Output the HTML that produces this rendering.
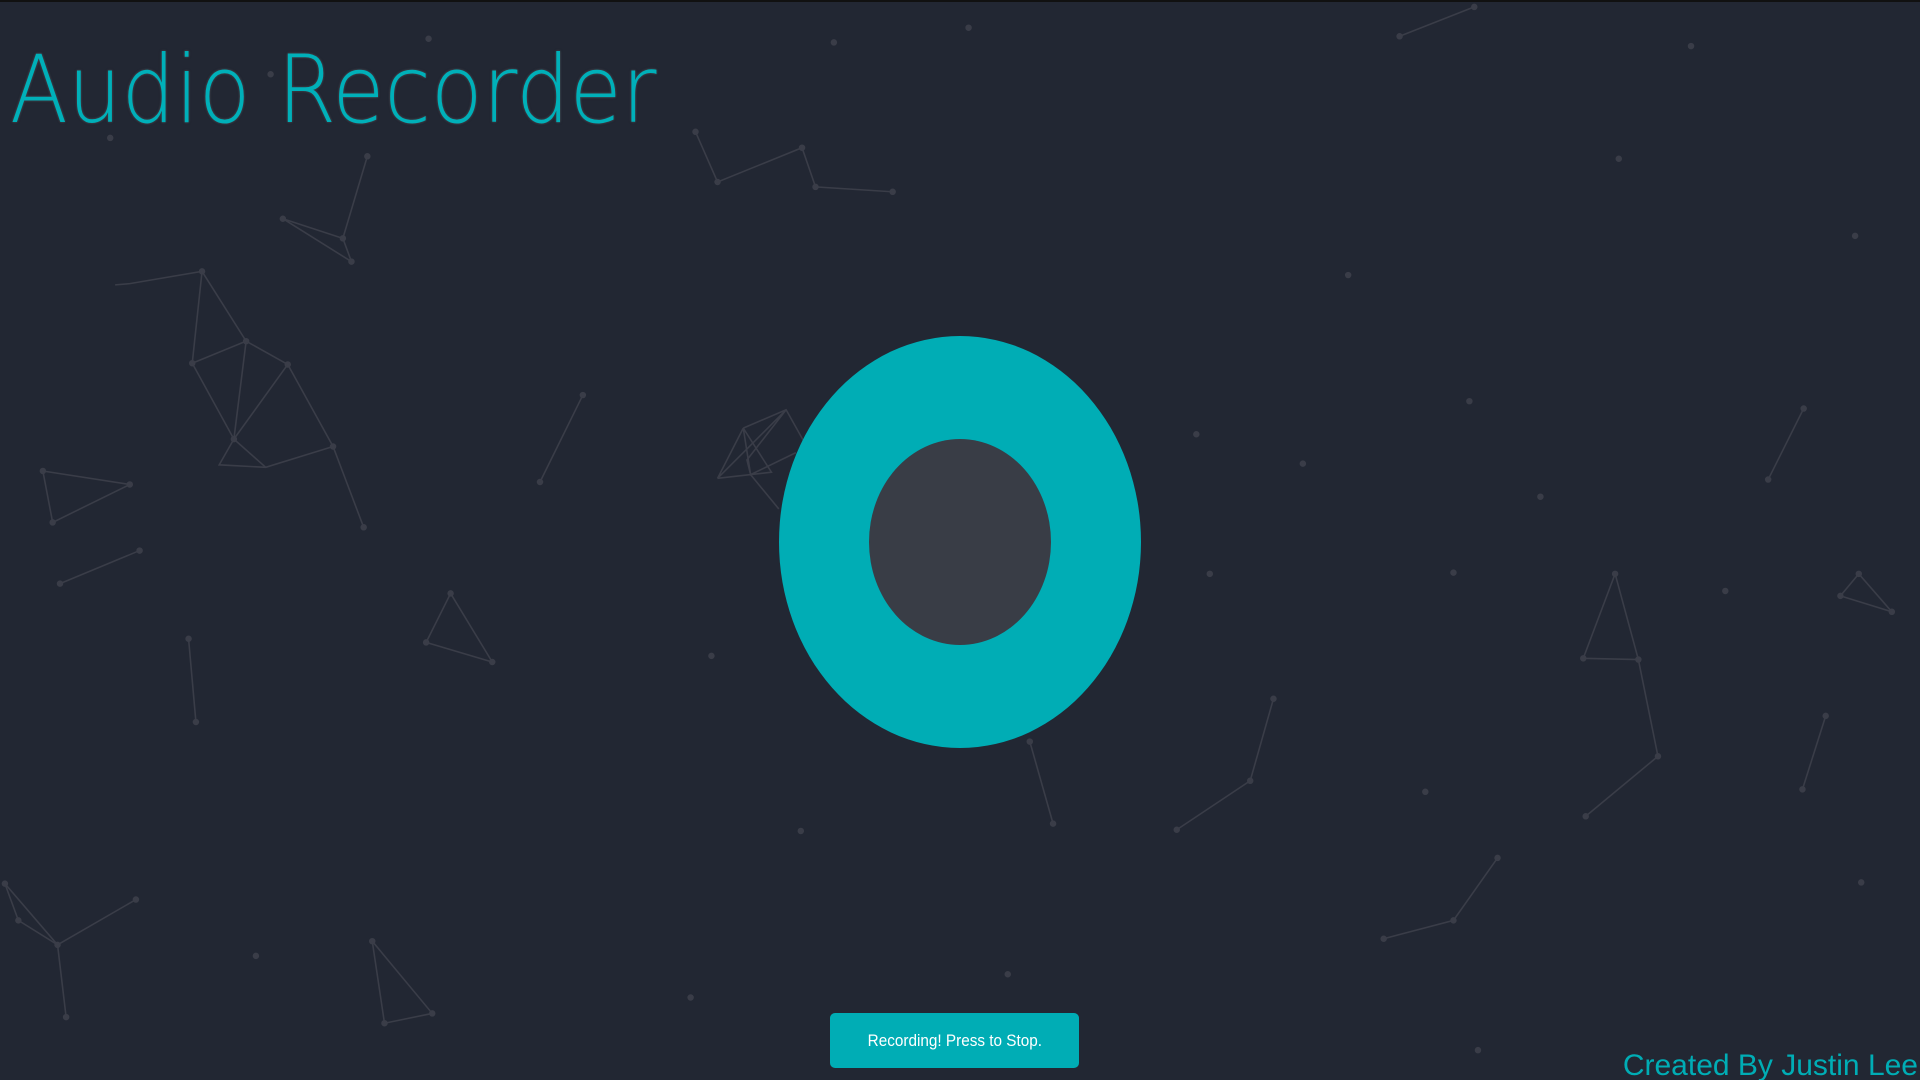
<!DOCTYPE html>
<html><head><meta charset="utf-8"><style>
html,body{margin:0;padding:0;width:1920px;height:1080px;overflow:hidden;background:#222733;}
body{position:relative;font-family:"Liberation Sans",sans-serif;border-top:2px solid #111;box-sizing:border-box;}
svg.bg{position:absolute;left:0;top:0;}
h1{position:absolute;left:10px;top:34px;margin:0;font-size:94px;color:#00b0b9;text-shadow:0 0 3px #3a3d46,0 0 3px #3a3d46,0 0 2px #3a3d46;font-family:"DejaVu Sans","Liberation Sans",sans-serif;font-weight:200;transform:scaleX(0.9);transform-origin:left;white-space:nowrap;}
.outer{position:absolute;left:779px;top:334px;width:362px;height:412px;border-radius:50%;background:#00adb5;}
.inner{position:absolute;left:869px;top:437px;width:182px;height:206px;border-radius:50%;background:#393d46;}
.btn{position:absolute;left:830px;top:1011px;width:249px;height:55px;background:#00adb5;border-radius:5px;color:#fff;font-size:17px;line-height:55px;text-align:center;}
.btn span{display:inline-block;transform:scaleX(0.9);}
.foot{position:absolute;right:2px;top:1047px;color:#00adb5;font-size:30px;white-space:nowrap;}
</style></head><body>
<svg class="bg" width="1920" height="1080" viewBox="0 0 1568 882" stroke="#3a3d48" stroke-width="1.3" fill="#3a3d48">
<g fill="none">
<polyline points="94,231 106,230 165,220 201,277 235,296 272,363 297,429"/>
<polyline points="165,220 157,295 191,357 179,378 217,380 272,363"/>
<polyline points="157,295 201,277 191,357 235,296"/>
<polyline points="191,357 217,380"/>
<polyline points="231,177 280,193 300,126"/>
<polyline points="231,177 287,212 280,193"/>
<polyline points="35,383 106,394 43,425 35,383"/>
<polyline points="49,475 114,448"/>
<polyline points="154,520 160,588"/>
<polyline points="368,483 348,523 402,539 368,483"/>
<polyline points="441,392 476,321"/>
<polyline points="568,106 586,147 655,119 666,151 729,155"/>
<polyline points="1143,28 1204,4"/>
<polyline points="607,348 642,333 656,358"/>
<polyline points="607,348 586,389 642,333 610,374 613,386 636,414"/>
<polyline points="586,389 630,384 607,348 613,386 650,368"/>
<polyline points="841,604 860,671"/>
<polyline points="961,676 1021,636 1040,569"/>
<polyline points="1130,765 1187,750 1223,699"/>
<polyline points="1295,665 1354,616 1338,537 1319,467 1293,536 1338,537"/>
<polyline points="1444,390 1473,332"/>
<polyline points="1503,485 1518,467 1545,498 1503,485"/>
<polyline points="1472,643 1491,583"/>
<polyline points="4,720 15,750 47,770 111,733"/>
<polyline points="4,720 47,770 54,829"/>
<polyline points="304,767 314,834 353,826 304,767"/>
</g>
<g>
<circle cx="350" cy="30" r="2"/><circle cx="681" cy="33" r="2"/><circle cx="791" cy="21" r="2"/><circle cx="1381" cy="36" r="2"/>
<circle cx="1322" cy="128" r="2"/><circle cx="1515" cy="191" r="2"/><circle cx="1101" cy="223" r="2"/><circle cx="1200" cy="326" r="2"/>
<circle cx="977" cy="353" r="2"/><circle cx="1064" cy="377" r="2"/><circle cx="1258" cy="404" r="2"/><circle cx="988" cy="467" r="2"/>
<circle cx="1187" cy="466" r="2"/><circle cx="1409" cy="481" r="2"/><circle cx="581" cy="534" r="2"/><circle cx="1164" cy="645" r="2"/>
<circle cx="654" cy="677" r="2"/><circle cx="1520" cy="719" r="2"/><circle cx="209" cy="779" r="2"/><circle cx="823" cy="794" r="2"/>
<circle cx="564" cy="813" r="2"/><circle cx="1207" cy="856" r="2"/><circle cx="90" cy="111" r="2"/><circle cx="221" cy="59" r="2"/>
<circle cx="165" cy="220" r="2"/><circle cx="201" cy="277" r="2"/><circle cx="235" cy="296" r="2"/><circle cx="157" cy="295" r="2"/><circle cx="191" cy="357" r="2"/><circle cx="272" cy="363" r="2"/><circle cx="297" cy="429" r="2"/>
<circle cx="1143" cy="28" r="2"/><circle cx="1204" cy="4" r="2"/><circle cx="568" cy="106" r="2"/><circle cx="586" cy="147" r="2"/><circle cx="655" cy="119" r="2"/><circle cx="666" cy="151" r="2"/><circle cx="729" cy="155" r="2"/>
<circle cx="231" cy="177" r="2"/><circle cx="280" cy="193" r="2"/><circle cx="300" cy="126" r="2"/><circle cx="287" cy="212" r="2"/>
<circle cx="35" cy="383" r="2"/><circle cx="106" cy="394" r="2"/><circle cx="43" cy="425" r="2"/><circle cx="49" cy="475" r="2"/><circle cx="114" cy="448" r="2"/>
<circle cx="154" cy="520" r="2"/><circle cx="160" cy="588" r="2"/><circle cx="368" cy="483" r="2"/><circle cx="348" cy="523" r="2"/><circle cx="402" cy="539" r="2"/>
<circle cx="441" cy="392" r="2"/><circle cx="476" cy="321" r="2"/><circle cx="841" cy="604" r="2"/><circle cx="860" cy="671" r="2"/>
<circle cx="961" cy="676" r="2"/><circle cx="1021" cy="636" r="2"/><circle cx="1040" cy="569" r="2"/><circle cx="1130" cy="765" r="2"/><circle cx="1187" cy="750" r="2"/><circle cx="1223" cy="699" r="2"/>
<circle cx="1295" cy="665" r="2"/><circle cx="1354" cy="616" r="2"/><circle cx="1338" cy="537" r="2"/><circle cx="1319" cy="467" r="2"/><circle cx="1293" cy="536" r="2"/>
<circle cx="1444" cy="390" r="2"/><circle cx="1473" cy="332" r="2"/><circle cx="1503" cy="485" r="2"/><circle cx="1518" cy="467" r="2"/><circle cx="1545" cy="498" r="2"/>
<circle cx="1472" cy="643" r="2"/><circle cx="1491" cy="583" r="2"/><circle cx="4" cy="720" r="2"/><circle cx="15" cy="750" r="2"/><circle cx="47" cy="770" r="2"/><circle cx="111" cy="733" r="2"/><circle cx="54" cy="829" r="2"/>
<circle cx="304" cy="767" r="2"/><circle cx="314" cy="834" r="2"/><circle cx="353" cy="826" r="2"/>
</g>
</svg>
<h1>Audio Recorder</h1>
<div class="outer"></div>
<div class="inner"></div>
<div class="btn"><span>Recording! Press to Stop.</span></div>
<div class="foot">Created By Justin Lee</div>
</body></html>
